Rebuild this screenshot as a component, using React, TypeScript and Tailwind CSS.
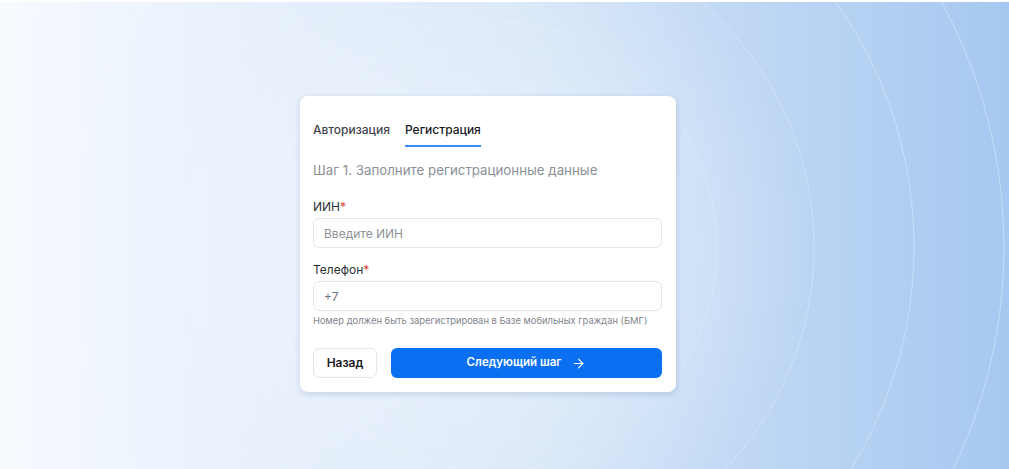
import { ArrowRight } from "lucide-react";

function Field({ label, placeholder, value }: { label: string; placeholder?: string; value?: string }) {
  return (
    <div className="flex flex-col gap-[3px]">
      <label className="text-[12px] leading-[16px] text-[#2b2f36]">
        {label}
        <span className="text-[#e0443a]">*</span>
      </label>
      <input
        readOnly
        placeholder={placeholder}
        value={value}
        className="h-[30px] w-full rounded-[6px] border border-[#e2e5e9] bg-white px-[10px] text-[12px] text-[#6f747c] placeholder:text-[#8d929a] outline-none"
      />
    </div>
  );
}

export default function App() {
  return (
    <div
      className="relative h-[469px] w-full overflow-hidden border-t-2 border-white bg-linear-to-r from-[#f7faff] via-[#d7e6f8] to-[#a6c8f0]"
      style={{ fontFamily: "Inter, 'Noto Sans', sans-serif" }}
    >
      <svg className="pointer-events-none absolute inset-0 h-full w-full" viewBox="0 0 1009 467">
        <defs>
          <radialGradient id="glow" cx="490" cy="245" r="330" gradientUnits="userSpaceOnUse">
            <stop offset="0" stopColor="#ffffff" stopOpacity="0.45" />
            <stop offset="0.65" stopColor="#ffffff" stopOpacity="0.2" />
            <stop offset="1" stopColor="#ffffff" stopOpacity="0" />
          </radialGradient>
        </defs>
        <rect x="0" y="0" width="1009" height="467" fill="url(#glow)" />
        {[
          [225, 0.2],
          [322, 0.28],
          [422, 0.32],
          [512, 0.35],
        ].map(([r, o]) => (
          <circle key={r} cx="492" cy="245" r={r} fill="none" stroke="#ffffff" strokeOpacity={o} strokeWidth="1" />
        ))}
      </svg>

      <div className="relative pl-[300px] pt-[94px]">
        <div className="w-[376px] rounded-[8px] bg-white pb-[14px] pl-[13px] pr-[14px] pt-[26px] shadow-[0_2px_6px_rgba(40,70,120,0.18)]">
          <div className="flex gap-[15px] text-[12px] font-medium leading-[16px]">
            <div className="pb-[7px] text-[#3f444b]">Авторизация</div>
            <div className="border-b-2 border-[#3b8df0] pb-[7px] text-[#16191d]">Регистрация</div>
          </div>

          <div className="mt-[13px] text-[13.3px] leading-[20px] text-[#8b9098]">
            Шаг 1. Заполните регистрационные данные
          </div>

          <div className="mt-[19px] flex flex-col gap-[14px]">
            <Field label="ИИН" placeholder="Введите ИИН" />
            <div className="flex flex-col gap-[3px]">
              <Field label="Телефон" value="+7" />
              <div className="whitespace-nowrap text-[9.4px] leading-[14px] text-[#7f848c]">
                Номер должен быть зарегистрирован в Базе мобильных граждан (БМГ)
              </div>
            </div>
          </div>

          <div className="mt-[20px] flex gap-[14px]">
            <button className="h-[30px] w-[64px] rounded-[6px] border border-[#e2e5e9] bg-white text-[12px] font-semibold text-[#1d2025]">
              Назад
            </button>
            <button className="flex h-[30px] flex-1 items-center justify-center gap-[10px] rounded-[6px] bg-[#0a6ff0] text-[11.5px] font-semibold text-white">
              Следующий шаг
              <ArrowRight className="h-[15px] w-[15px]" strokeWidth={1.75} />
            </button>
          </div>
        </div>
      </div>
    </div>
  );
}
